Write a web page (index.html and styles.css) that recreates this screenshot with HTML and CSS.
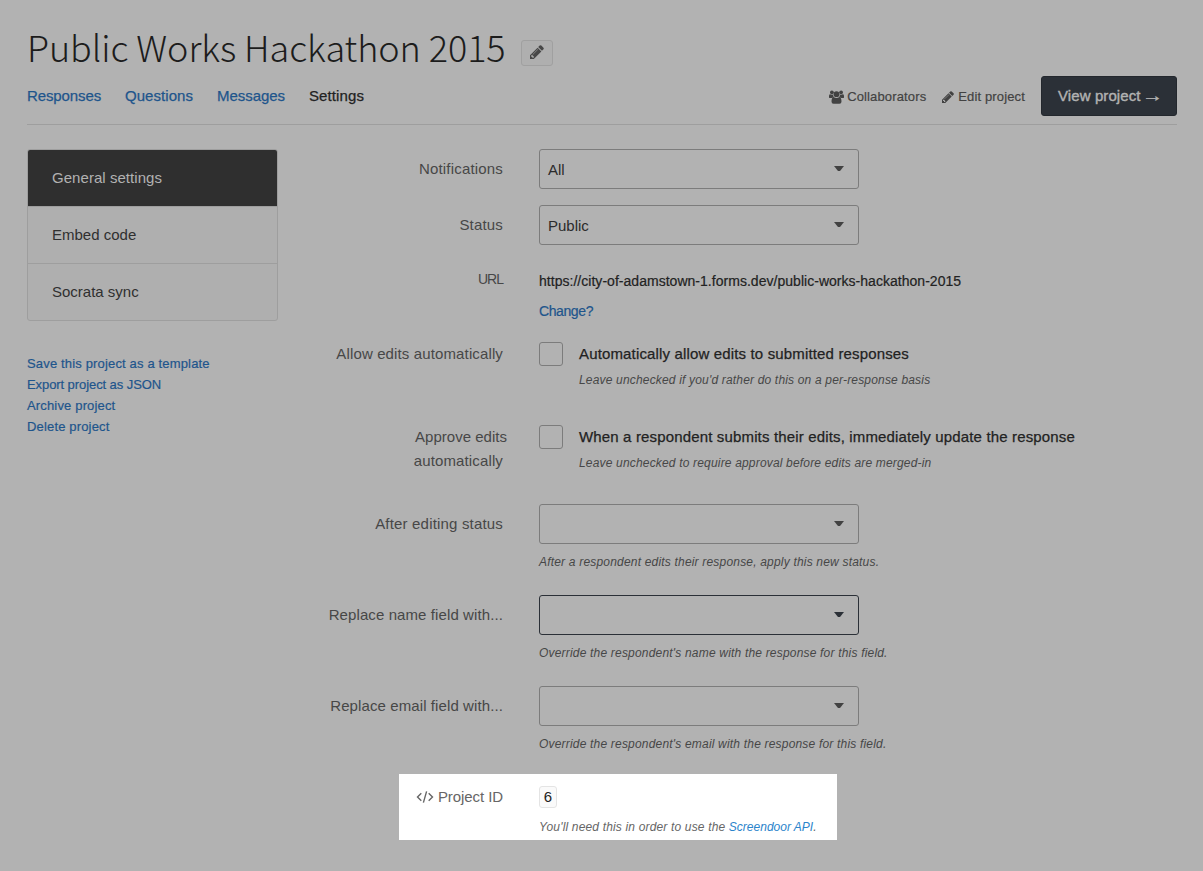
FILE: index.html
```html
<!DOCTYPE html>
<html lang="en">
<head>
<meta charset="utf-8">
<title>Public Works Hackathon 2015 – Settings</title>
<link rel="stylesheet" href="styles.css">
</head>
<body>
<svg class="sprite" width="0" height="0" aria-hidden="true">
  <symbol id="pencil" viewBox="128 128 1536 1536"><path d="M491 1536l91-91-235-235-91 91v107h128v128h107zm523-928q0-22-22-22-10 0-17 7l-542 542q-7 7-7 17 0 22 22 22 10 0 17-7l542-542q7-7 7-17zm-54-192l416 416-832 832h-416v-416zm683 96q0 53-37 90l-166 166-416-416 166-165q36-38 90-38 53 0 91 38l235 234q37 39 37 91z"/></symbol>
  <symbol id="users" viewBox="0 0 15 14"><circle cx="2.900" cy="2.300" r="1.900"/><circle cx="12.100" cy="2.300" r="1.900"/><circle cx="7.500" cy="4.200" r="2.900"/><path d="M0 7.200V6q0-1.700 1-1.700 1.700.8 3 .3 0 1.600.9 2.600-1.400 0-2.200.9H1.100Q0 8 0 7.200zM15 7.200V6q0-1.700-1-1.700-1.700.8-3 .3 0 1.600-.9 2.600 1.400 0 2.200.9h1.600q1.100-.1 1.100-.9zM4.900 7.200q2.600 1.600 5.200 0 2.400 0 2.400 4.300 0 2.300-2 2.300h-6q-2 0-2-2.300 0-4.300 2.400-4.300z"/></symbol>
</svg>

<header class="header">
  <div class="title-row">
    <h1 class="title">Public Works Hackathon 2015</h1>
    <button class="icon-button" aria-label="Rename"><svg class="icon-pencil"><use href="#pencil"/></svg></button>
  </div>
  <div class="nav-row">
    <nav class="tabs">
      <a class="tab tab-responses">Responses</a>
      <a class="tab tab-questions">Questions</a>
      <a class="tab tab-messages">Messages</a>
      <a class="tab tab-current">Settings</a>
    </nav>
    <div class="actions">
      <a class="action action-users"><svg class="icon-users"><use href="#users"/></svg><span>Collaborators</span></a>
      <a class="action"><svg class="icon-pencil-small"><use href="#pencil"/></svg><span>Edit project</span></a>
      <a class="view-button">View project <span class="arrow">→</span></a>
    </div>
  </div>
</header>

<main class="main">
  <aside class="sidebar">
    <ul class="menu">
      <li class="menu-item menu-item-active">General settings</li>
      <li class="menu-item">Embed code</li>
      <li class="menu-item">Socrata sync</li>
    </ul>
    <div class="links">
      <a class="link-save">Save this project as a template</a>
      <a class="link-export">Export project as JSON</a>
      <a>Archive project</a>
      <a>Delete project</a>
    </div>
  </aside>

  <form class="form">
    <div class="row row-select">
      <label class="label">Notifications</label>
      <div><div class="select">All</div></div>
    </div>
    <div class="row row-status">
      <label class="label">Status</label>
      <div><div class="select">Public</div></div>
    </div>
    <div class="row row-url">
      <label class="label label-url">URL</label>
      <div class="url-field">
        <div class="url">https://city-of-adamstown-1.forms.dev/public-works-hackathon-2015</div>
        <a class="change">Change?</a>
      </div>
    </div>
    <div class="row row-allow">
      <label class="label label-check">Allow edits automatically</label>
      <div class="check">
        <span class="box"></span>
        <div><div class="check-label">Automatically allow edits to submitted responses</div><p class="help help-check">Leave unchecked if you'd rather do this on a per-response basis</p></div>
      </div>
    </div>
    <div class="row row-approve">
      <label class="label label-check"><span class="outdent">Approve edits</span><span>automatically</span></label>
      <div class="check">
        <span class="box"></span>
        <div><div class="check-label">When a respondent submits their edits, immediately update the response</div><p class="help help-check">Leave unchecked to require approval before edits are merged-in</p></div>
      </div>
    </div>
    <div class="row row-help">
      <label class="label">After editing status</label>
      <div><div class="select"></div><p class="help">After a respondent edits their response, apply this new status.</p></div>
    </div>
    <div class="row row-help">
      <label class="label label-long">Replace name field with...</label>
      <div><div class="select select-focus"></div><p class="help">Override the respondent's name with the response for this field.</p></div>
    </div>
    <div class="row row-last">
      <label class="label label-long">Replace email field with...</label>
      <div><div class="select"></div><p class="help">Override the respondent's email with the response for this field.</p></div>
    </div>
    <div class="spotlight">
      <div class="label-id"><svg class="icon-code" viewBox="0 0 18 14"><path d="M5.300 3.200 1.500 7l3.800 3.800M12.700 3.200 16.500 7l-3.800 3.800M10.600 1.400 7.400 12.600"/></svg><span>Project ID</span></div>
      <div><code class="id">6</code><p class="help help-id">You'll need this in order to use the <a class="api">Screendoor API</a>.</p></div>
    </div>
  </form>
</main>
</body>
</html>
```
FILE: styles.css
```css
* { box-sizing: border-box; }

body {
  margin: 0;
  padding: 0 26px 0 27px;
  min-height: 871px;
  background: #b2b2b2;
  color: #222;
  font: 15px/24px "Liberation Sans", Arial, sans-serif;
  overflow: hidden;
}

h1, p, ul { margin: 0; padding: 0; }
ul { list-style: none; }
svg { display: block; fill: currentColor; }
.sprite { position: absolute; }

/* Header */
.header { height: 125px; border-bottom: 1px solid #9e9e9e; }
.title-row { display: flex; height: 76px; padding-top: 20px; gap: 16px; }
.title {
  width: 478px;
  font: 300 36px/52px "Noto Sans CJK SC", "Open Sans", sans-serif;
  letter-spacing: -0.06px;
  white-space: nowrap;
  color: #1c1c1c;
}
.icon-button {
  display: flex;
  align-items: center;
  justify-content: center;
  width: 32px;
  height: 26px;
  margin-top: 20px;
  padding: 0 0 2px;
  border: 1px solid #a0a0a0;
  border-radius: 3px;
  background: #afafaf;
  color: #474747;
}
.icon-pencil { width: 14px; height: 14px; }
.icon-pencil-small { width: 12px; height: 12px; }
.icon-users { width: 15px; height: 14px; }

.nav-row { display: flex; justify-content: space-between; align-items: center; height: 40px; }
.tabs { display: flex; gap: 24px; color: #1e558c; -webkit-text-stroke: 0.25px; }
.tab { white-space: nowrap; }
.tab-responses { width: 74px; letter-spacing: -0.11px; }
.tab-questions { width: 68px; letter-spacing: 0.05px; }
.tab-messages { width: 68px; letter-spacing: -0.04px; }
.tab-current { color: #222; letter-spacing: 0.1px; }
.actions { display: flex; align-items: center; gap: 16px; }
.action {
  display: flex;
  align-items: center;
  gap: 4px;
  padding-top: 1px;
  font-size: 13px;
  letter-spacing: 0.14px;
  color: #424242;
  -webkit-text-stroke: 0.2px;
}
.action-users { gap: 3px; }
.view-button {
  width: 136px;
  height: 40px;
  border: 1px solid #23272d;
  border-radius: 3px;
  background: #2b3037;
  color: #b2b2b2;
  line-height: 38px;
  text-align: center;
  letter-spacing: 0.1px;
  -webkit-text-stroke: 0.4px;
}
.arrow { display: inline-block; line-height: 1; transform: scaleX(1.4); }

/* Columns */
.main { display: flex; gap: 24px; padding-top: 24px; }
.sidebar { width: 251px; }
.menu { border: 1px solid #9e9e9e; border-radius: 3px; background: #afafaf; overflow: hidden; }
.menu-item { height: 57px; padding-left: 24px; border-bottom: 1px solid #9e9e9e; line-height: 56px; color: #303030; }
.menu-item:last-child { height: 56px; border-bottom: 0; }
.menu-item-active { background: #2f2f2f; background-clip: padding-box; color: #b2b2b2; letter-spacing: 0.05px; }
.links {
  display: flex;
  flex-direction: column;
  margin-top: 32px;
  font-size: 13px;
  line-height: 21px;
  letter-spacing: 0.16px;
  color: #1e558c;
  -webkit-text-stroke: 0.2px;
}
.link-export { letter-spacing: -0.08px; }

/* Settings form */
.form { width: 875px; }
.row { display: grid; grid-template-columns: 201px 1fr; column-gap: 36px; }
.row-select { height: 56px; }
.row-status { height: 64px; }
.row-url { height: 73px; }
.row-allow { height: 83px; }
.row-approve { height: 79px; }
.row-help { height: 91px; }
.row-last { height: 88px; }

.label {
  display: flex;
  flex-direction: column;
  padding-top: 8px;
  text-align: right;
  color: #474747;
  letter-spacing: 0.18px;
  white-space: nowrap;
}
.label-long { letter-spacing: 0.1px; }
.label-url { padding-top: 0; margin-top: -2px; font-size: 14px; letter-spacing: -1px; }
.label-check { padding-top: 0; letter-spacing: 0.13px; }
.outdent { margin-right: -4px; letter-spacing: 0.02px; }

.select {
  display: flex;
  align-items: center;
  justify-content: space-between;
  width: 320px;
  height: 40px;
  padding: 1px 14px 0 8px;
  border: 1px solid #7c7c7c;
  border-radius: 3px;
  color: #2b2b2b;
}
.select::after {
  content: "";
  width: 10px;
  height: 5px;
  margin: -2px 0 0 auto;
  background: #424242;
  clip-path: polygon(0 0, 100% 0, 60% 100%, 40% 100%);
}
.select-focus { border-color: #2b3037; }
.select-focus::after { background: #2b3037; }

.help { margin-top: 6px; font-size: 12px; font-style: italic; letter-spacing: 0.19px; color: #474747; white-space: nowrap; }
.help-check { margin-top: 2px; letter-spacing: 0.175px; }

.url-field { font-size: 14px; -webkit-text-stroke: 0.2px; }
.url { letter-spacing: 0.03px; }
.change { display: block; margin-top: 6px; letter-spacing: -0.4px; color: #1e558c; }

.check { display: flex; gap: 16px; }
.box { width: 24px; height: 24px; border: 1px solid #7c7c7c; border-radius: 3px; }
.check-label { letter-spacing: 0.153px; -webkit-text-stroke: 0.25px; white-space: nowrap; }

/* Highlighted project ID */
.spotlight {
  display: grid;
  grid-template-columns: 104px 1fr;
  column-gap: 36px;
  width: 438px;
  height: 66px;
  margin-left: 97px;
  padding-top: 11px;
  background: #fff;
}
.label-id { display: flex; justify-content: flex-end; align-items: center; gap: 4px; height: 24px; color: #666; letter-spacing: -0.08px; }
.icon-code { width: 18px; height: 14px; fill: none; stroke: currentColor; stroke-width: 1.4; }
.id {
  display: block;
  width: 18px;
  height: 22px;
  margin-top: 1px;
  border: 1px solid #e4e4e4;
  border-radius: 3px;
  background: #fafafa;
  color: #222;
  font: 15px/20px "Liberation Sans", Arial, sans-serif;
  text-align: center;
}
.help-id { margin-top: 7px; color: #666; letter-spacing: 0.165px; }
.api { color: #2b84cb; letter-spacing: 0; }
```
